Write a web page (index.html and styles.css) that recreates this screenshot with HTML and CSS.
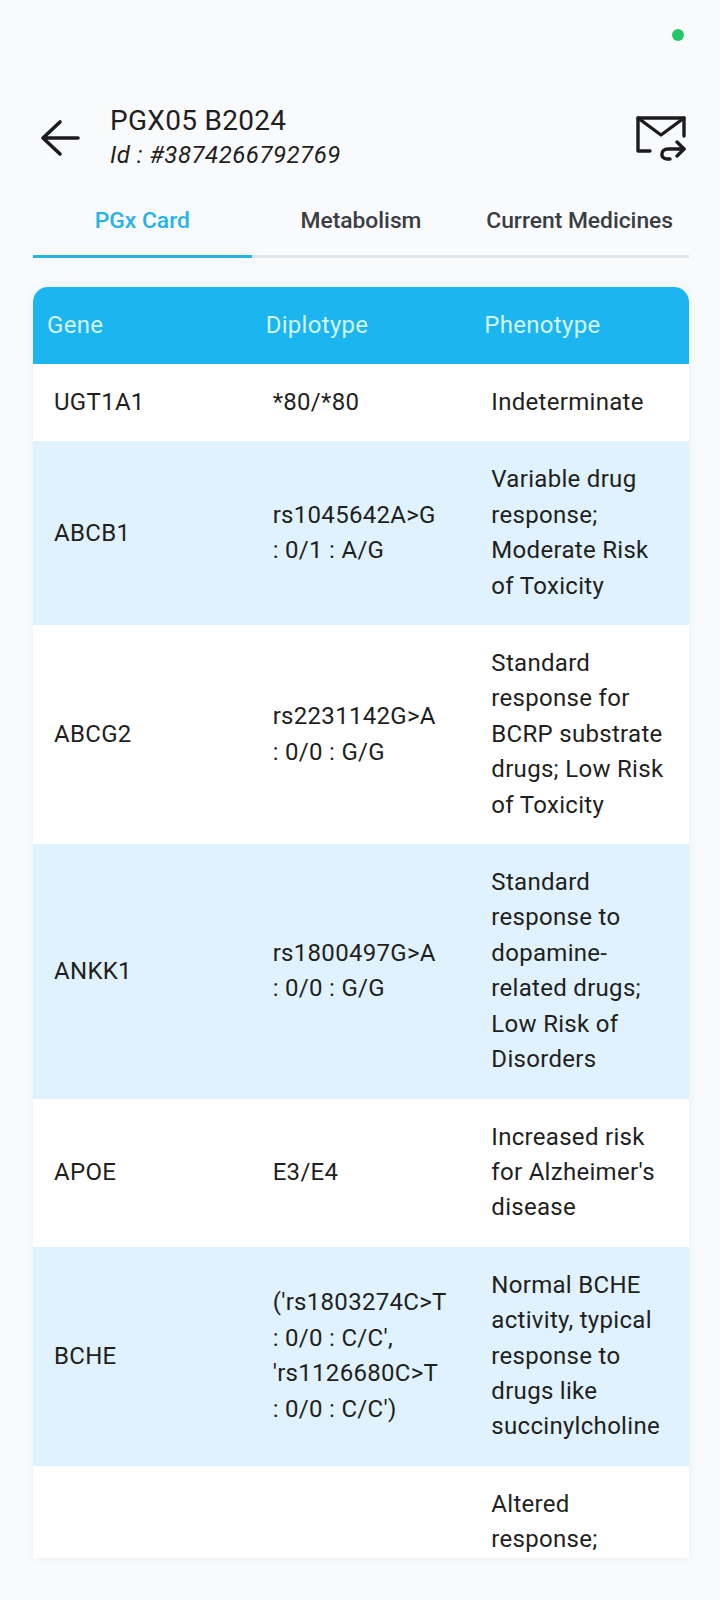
FILE: index.html
```html
<!DOCTYPE html>
<html lang="en">
<head>
    <meta charset="UTF-8">
    <meta name="viewport" content="width=device-width, initial-scale=1.0">
    <title>PGx Card</title>
    <link rel="stylesheet" href="styles.css">
</head>
<body>
    <div class="status-bar"><span class="status-dot"></span></div>

    <header class="top-bar">
        <svg class="back-icon" width="40" height="40" viewBox="0 0 40 40" fill="none" stroke="#1c1c1e" stroke-width="3.6" stroke-linecap="round" stroke-linejoin="round">
            <path d="M38 20H3M20 4L3 20l17 16"/>
        </svg>
        <div class="title-block">
            <div class="title">PGX05 B2024</div>
            <div class="subtitle">Id : #3874266792769</div>
        </div>
        <svg class="mail-icon" width="52" height="50" viewBox="0 0 52 50" fill="none" stroke="#1c1c1e" stroke-width="3.4" stroke-linecap="round" stroke-linejoin="round">
            <path d="M15 37H3V4h46v18"/>
            <path d="M3 4l23 17L49 4"/>
            <path d="M49 35H33c-8 0-8 10-1 10h3"/>
            <path d="M42 28l7 7-7 7"/>
        </svg>
    </header>

    <nav class="tabs">
        <div class="tab active">PGx Card</div>
        <div class="tab">Metabolism</div>
        <div class="tab">Current Medicines</div>
    </nav>

    <main class="card">
        <div class="row head">
            <div>Gene</div>
            <div>Diplotype</div>
            <div>Phenotype</div>
        </div>
        <div class="row">
            <div>UGT1A1</div>
            <div>*80/*80</div>
            <div>Indeterminate</div>
        </div>
        <div class="row alt">
            <div>ABCB1</div>
            <div>rs1045642A&gt;G :&nbsp;0/1&nbsp;:&nbsp;A/G</div>
            <div>Variable drug response; Moderate Risk of Toxicity</div>
        </div>
        <div class="row">
            <div>ABCG2</div>
            <div>rs2231142G&gt;A :&nbsp;0/0&nbsp;:&nbsp;G/G</div>
            <div>Standard response for BCRP substrate drugs; Low Risk of Toxicity</div>
        </div>
        <div class="row alt">
            <div>ANKK1</div>
            <div>rs1800497G&gt;A :&nbsp;0/0&nbsp;:&nbsp;G/G</div>
            <div>Standard response to dopamine-related drugs; Low Risk of Disorders</div>
        </div>
        <div class="row">
            <div>APOE</div>
            <div>E3/E4</div>
            <div>Increased risk for Alzheimer's disease</div>
        </div>
        <div class="row alt">
            <div>BCHE</div>
            <div>('rs1803274C&gt;T :&nbsp;0/0&nbsp;:&nbsp;C/C', 'rs1126680C&gt;T :&nbsp;0/0&nbsp;:&nbsp;C/C')</div>
            <div>Normal BCHE activity, typical response to drugs like succinylcholine</div>
        </div>
        <div class="row">
            <div></div>
            <div></div>
            <div>Altered response;</div>
        </div>
    </main>
</body>
</html>
```

FILE: styles.css
```css
html, body {
    margin: 0;
    height: 1600px;
    overflow: hidden;
}
body {
    font-family: Roboto, sans-serif;
    background-color: #f9fafc;
    color: #1f1f21;
}

.status-bar {
    height: 70px;
    padding: 0 36px 0 0;
    display: flex;
    justify-content: flex-end;
    align-items: center;
    box-sizing: border-box;
}
.status-dot {
    width: 12px;
    height: 12px;
    border-radius: 50%;
    background-color: #22c768;
}

.top-bar {
    height: 110px;
    padding: 33px 33px 0 40px;
    box-sizing: border-box;
    display: flex;
    align-items: flex-start;
}
.back-icon {
    margin-top: 15px;
}
.title-block {
    margin-left: 30px;
    flex: 1;
}
.title {
    font-size: 28px;
    line-height: 35px;
    letter-spacing: 0.3px;
}
.subtitle {
    font-size: 24px;
    line-height: 35px;
    font-style: italic;
    letter-spacing: 0.5px;
}
.mail-icon {
    margin-top: 11px;
}

.tabs {
    margin: 0 31px 0 33px;
    height: 75px;
    display: grid;
    grid-template-columns: repeat(3, 1fr);
    border-bottom: 3px solid #dfe7ec;
}
.tab {
    padding-top: 24px;
    font-size: 22.8px;
    font-weight: 500;
    line-height: 34px;
    text-align: center;
    color: #3a3d42;
}
.tab.active {
    color: #27b3e6;
    box-shadow: 0 3px 0 #27b3e6;
}

.card {
    margin: 29px 31px 0 33px;
    height: 1271px;
    overflow: hidden;
    border-radius: 15px 15px 0 0;
    background-color: #fff;
    box-shadow: 0 0 12px rgba(0, 0, 0, 0.05);
}
.row {
    display: grid;
    grid-template-columns: repeat(3, 1fr);
    align-items: center;
    padding: 21px 0;
    font-size: 24px;
    line-height: 35.4px;
    letter-spacing: 0.3px;
}
.row > div {
    padding: 0 18px 0 21px;
}
.row.alt {
    background-color: #dff2fd;
}
.row.head {
    height: 77px;
    box-sizing: border-box;
    background-color: #1bb5ef;
    color: #d4f4fb;
}
.row.head > div {
    padding-left: 14px;
}
```
